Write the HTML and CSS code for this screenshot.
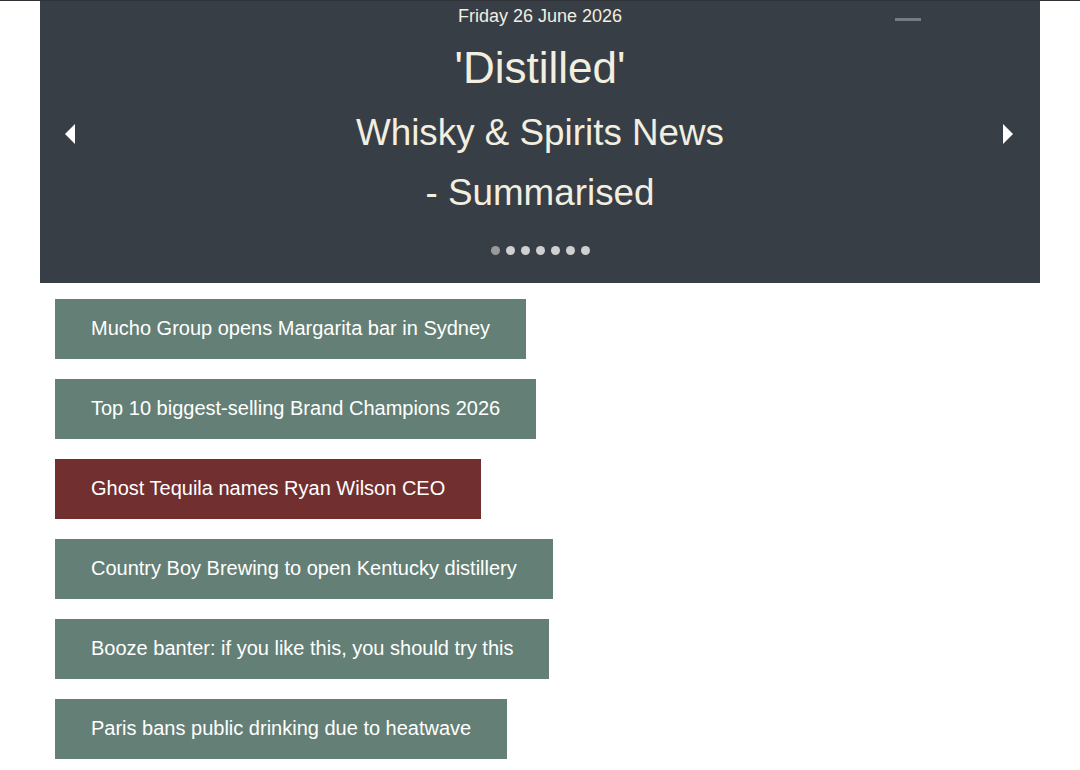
FILE: index.html
```html
<!DOCTYPE html>
<html lang="en">
<head>
<meta charset="utf-8">
<title>Distilled</title>
<link rel="stylesheet" href="styles.css">
</head>
<body>
<div class="topline"></div>
<header class="banner">
  <span class="dash"></span>
  <button class="arrow arrow-left" aria-label="Previous">
    <svg width="12" height="20" viewBox="0 0 12 20"><polygon points="11,0 11,20 1,10" fill="#ffffff"/></svg>
  </button>
  <div class="banner-content">
    <div class="date">Friday 26 June 2026</div>
    <h1 class="title">'Distilled'</h1>
    <div class="subtitle">Whisky &amp; Spirits News<br>- Summarised</div>
    <div class="dots">
      <span class="dot active"></span><span class="dot"></span><span class="dot"></span><span class="dot"></span><span class="dot"></span><span class="dot"></span><span class="dot"></span>
    </div>
  </div>
  <button class="arrow arrow-right" aria-label="Next">
    <svg width="12" height="20" viewBox="0 0 12 20"><polygon points="1,0 1,20 11,10" fill="#ffffff"/></svg>
  </button>
</header>
<main class="list">
  <a class="item">Mucho Group opens Margarita bar in Sydney</a>
  <a class="item">Top 10 biggest-selling Brand Champions 2026</a>
  <a class="item red">Ghost Tequila names Ryan Wilson CEO</a>
  <a class="item">Country Boy Brewing to open Kentucky distillery</a>
  <a class="item">Booze banter: if you like this, you should try this</a>
  <a class="item">Paris bans public drinking due to heatwave</a>
</main>
</body>
</html>
```

FILE: styles.css
```css
html, body {
  margin: 0;
  padding: 0;
  background: #ffffff;
  font-family: "Liberation Sans", Arial, sans-serif;
}

.topline {
  height: 1px;
  background: #2f3236;
}

.banner {
  position: relative;
  margin: 0 40px;
  background: #373e45;
  color: #f2eee0;
  display: flex;
  align-items: flex-start;
  height: 282px;
}

.banner-content {
  flex: 1;
  display: flex;
  flex-direction: column;
  align-items: center;
  text-align: center;
}

.date {
  font-size: 18px;
  line-height: 30px;
  height: 30px;
}

.title {
  margin: 7px 0 0;
  font-size: 44px;
  font-weight: normal;
  line-height: 60px;
}

.subtitle {
  margin-top: 5px;
  font-size: 36.8px;
  line-height: 60px;
}

.dots {
  margin-top: 23px;
  display: flex;
  gap: 6px;
}

.dot {
  width: 9px;
  height: 9px;
  border-radius: 50%;
  background: #d0d0d0;
}

.dot.active {
  background: #9a9a9a;
}

.arrow {
  border: 0;
  background: transparent;
  padding: 0;
  margin-top: 122px;
  width: 60px;
  height: 22px;
  display: flex;
  align-items: center;
  justify-content: center;
}

.arrow-left {
  justify-content: flex-start;
  padding-left: 24px;
}

.arrow-right {
  justify-content: flex-end;
  padding-right: 26px;
}

.dash {
  position: absolute;
  left: 855px;
  top: 17px;
  width: 26px;
  height: 3px;
  background: #747c80;
}

.list {
  padding: 16px 55px 20px;
  display: flex;
  flex-direction: column;
  align-items: flex-start;
  gap: 20px;
}

.item {
  display: block;
  background: #647f76;
  color: #ffffff;
  font-size: 20px;
  line-height: 58px;
  height: 60px;
  padding: 0 36px;
  white-space: nowrap;
}

.item.red {
  background: #722f30;
}
```
